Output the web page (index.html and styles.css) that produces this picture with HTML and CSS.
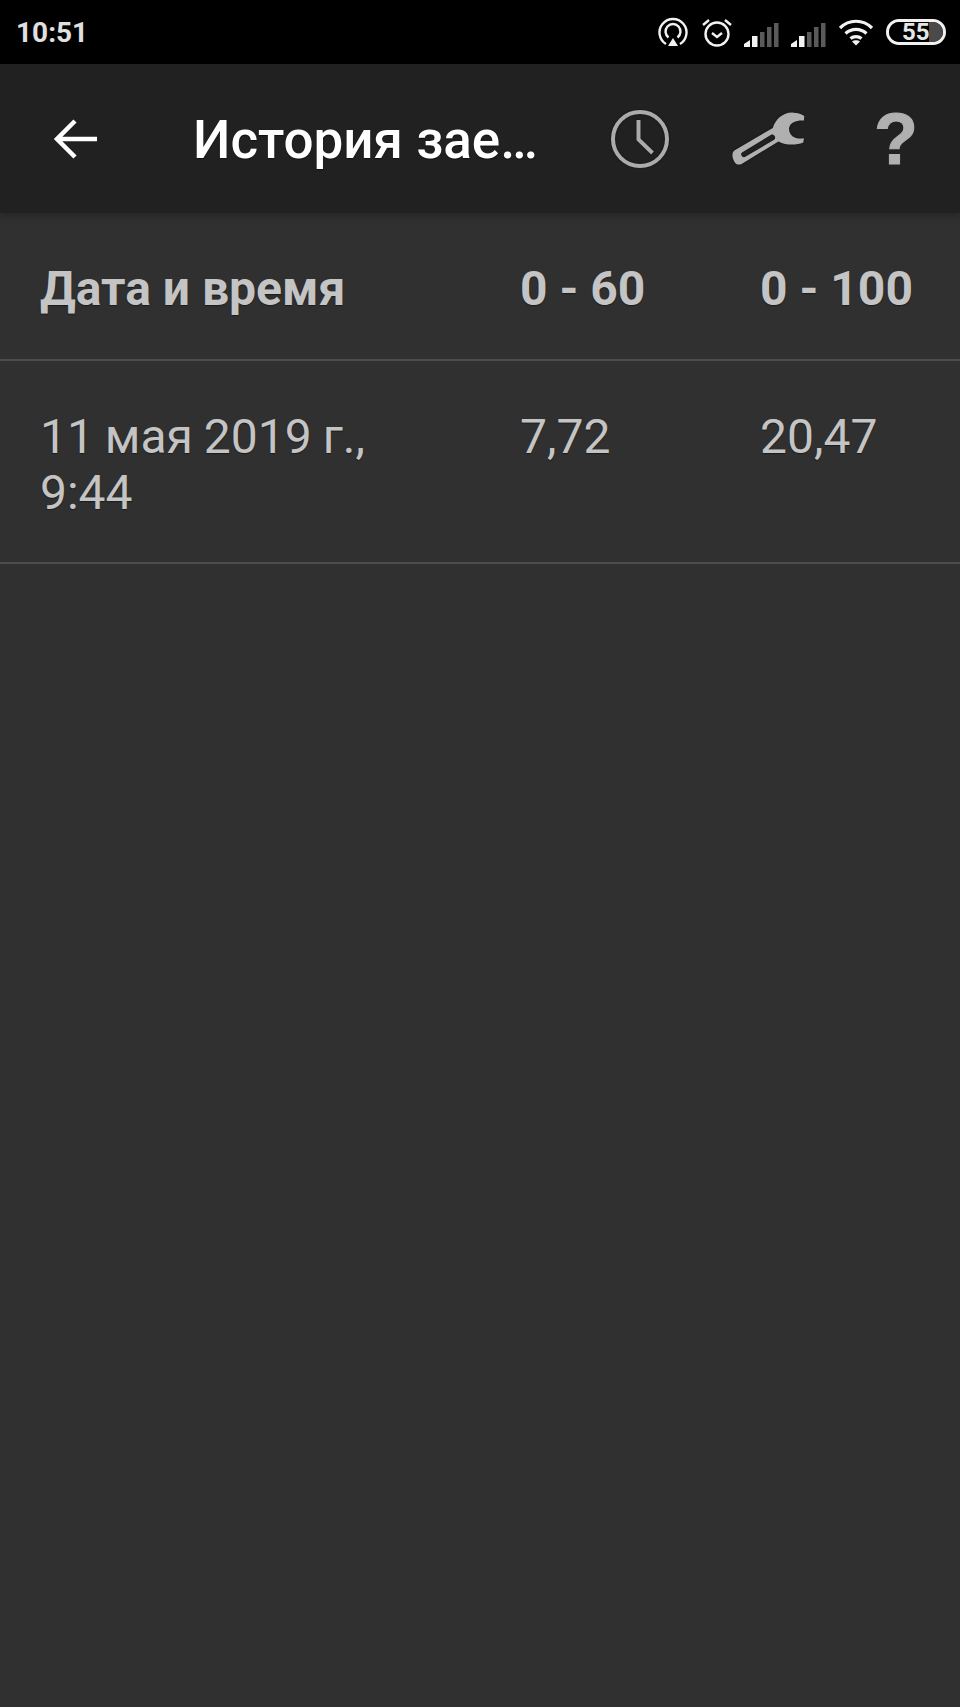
FILE: index.html
```html
<!DOCTYPE html>
<html lang="ru">

<head>
    <meta charset="UTF-8">
    <meta name="viewport" content="width=device-width, initial-scale=1.0">
    <title>История заездов</title>
    <link rel="stylesheet" href="styles.css">
</head>

<body>
    <!-- status bar -->
    <div class="status">
        <span class="time">10:51</span>
        <div class="status-icons">
            <svg class="ic-cast" viewBox="0 0 32 32" width="32" height="32">
                <path d="M9 28A13.5 13.5 0 1 1 23 28M11.5 21.5A7.5 7.5 0 1 1 20.5 21.5" fill="none" stroke="#f2f2f2" stroke-width="2.400" />
                <path d="M16 22L21 30H11Z" fill="#f2f2f2" />
            </svg>
            <svg class="ic-alarm" viewBox="0 0 32 32" width="32" height="32">
                <circle cx="16" cy="18" r="11.5" fill="none" stroke="#f2f2f2" stroke-width="2.400" />
                <path d="M11 17L16 21L21 17" fill="none" stroke="#f2f2f2" stroke-width="2.400" />
                <path d="M2 9L8 4M30 9L24 4" fill="none" stroke="#f2f2f2" stroke-width="2.400" />
            </svg>
            <svg class="ic-signal" viewBox="0 0 35 26" width="35" height="26">
                <path d="M0 25V22L6 18V25Z" fill="#f2f2f2" />
                <rect x="8" y="14" width="5.500" height="11" fill="#f2f2f2" />
                <rect x="16" y="10" width="4.500" height="15" fill="#5a5a5a" />
                <rect x="23" y="5" width="4.500" height="20" fill="#5a5a5a" />
                <rect x="30" y="1" width="4.500" height="24" fill="#5a5a5a" />
            </svg>
            <svg class="ic-signal" viewBox="0 0 35 26" width="35" height="26">
                <path d="M0 25V22L6 18V25Z" fill="#f2f2f2" />
                <rect x="8" y="14" width="5.500" height="11" fill="#f2f2f2" />
                <rect x="16" y="10" width="4.500" height="15" fill="#5a5a5a" />
                <rect x="23" y="5" width="4.500" height="20" fill="#5a5a5a" />
                <rect x="30" y="1" width="4.500" height="24" fill="#5a5a5a" />
            </svg>
            <svg class="ic-wifi" viewBox="0 0 36 28" width="36" height="28">
                <path d="M2 10C11 1 25 1 34 10M7.500 15.500C13.500 10 22.500 10 28.500 15.500M12.500 20.500C15.500 18 20.500 18 23.500 20.500" fill="none" stroke="#f2f2f2" stroke-width="3.200" />
                <path d="M18 27.500L14 23.500C16 21.800 20 21.800 22 23.500Z" fill="#f2f2f2" />
            </svg>
            <div class="battery">
                <div class="battery-level"></div>
                <span class="battery-num">55</span>
            </div>
        </div>
    </div>

    <!-- toolbar -->
    <div class="toolbar">
        <svg class="back" viewBox="0 0 44 44" width="44" height="44">
            <path d="M44 22H4M22 4L4 22L22 40" fill="none" stroke="#fff" stroke-width="4.500" />
        </svg>
        <div class="title">История зае…</div>
        <svg class="tool tool-clock" viewBox="0 0 60 60" width="60" height="60">
            <circle cx="30" cy="30" r="27" fill="none" stroke="#ababab" stroke-width="4" />
            <path d="M28.500 11V30.500L42.500 44" fill="none" stroke="#ababab" stroke-width="4" />
        </svg>
        <svg class="tool tool-wrench" viewBox="420 60 230 175" width="77" height="58">
            <path fill="#b0b0b0" fill-rule="evenodd" d="M432 182L548 114C556 88 580 66 610 68C625 68 635 72 643 78L642 92C625 90 600 95 597 115C596 140 620 150 642 145L640 158C620 166 590 168 565 155L455 222C445 228 435 224 430 212C424 200 425 188 432 182ZM455 188C451 191 452 198 456 200C458 203 462 203 465 201L552 150C556 147 556 142 553 138C550 134 546 133 543 135Z" />
        </svg>
        <span class="tool-help">?</span>
    </div>

    <!-- table -->
    <div class="table">
        <div class="row row-head">
            <div>Дата и время</div>
            <div>0 - 60</div>
            <div>0 - 100</div>
        </div>
        <div class="row row-item">
            <div>11 мая 2019 г., <br>9:44</div>
            <div>7,72</div>
            <div>20,47</div>
        </div>
    </div>
</body>

</html>
```

FILE: styles.css
```css
html,
body {
    margin: 0;
    height: 100%;
}

body {
    display: flex;
    flex-direction: column;
    overflow: hidden;
    background: #303030;
    font-family: Roboto, "Liberation Sans", sans-serif;
}

.status {
    height: 64px;
    flex: none;
    display: flex;
    align-items: center;
    justify-content: space-between;
    padding: 0 14px 0 16px;
    background: #000;
}

.time {
    font-size: 28px;
    font-weight: 700;
    color: #e0e0e0;
}

.status-icons {
    display: flex;
    align-items: center;
    gap: 12px;
}

.ic-signal {
    margin-top: 6px;
}

.ic-alarm {
    margin-right: -1px;
}

.battery {
    position: relative;
    width: 54px;
    height: 20px;
    border: 3px solid #f2f2f2;
    border-radius: 13px;
    overflow: hidden;
}

.battery-level {
    width: 40px;
    height: 100%;
    background: #000;
    box-shadow: 20px 0 0 #4a4a4a;
}

.battery-num {
    position: absolute;
    left: 13px;
    top: -4px;
    font-size: 24px;
    line-height: 28px;
    font-weight: 700;
    color: #e6e6e6;
}

.toolbar {
    position: relative;
    height: 149px;
    flex: none;
    display: flex;
    align-items: center;
    padding: 0 42px 0 53px;
    background: #212121;
    box-shadow: 0 2px 8px rgba(0, 0, 0, .25);
}

.title {
    margin-left: 96px;
    padding-top: 2px;
    width: 423px;
    font-size: 53px;
    font-weight: 500;
    color: #fff;
    white-space: nowrap;
    text-shadow: 0 1px 1px #111;
}

.back {
    flex: none;
}

.tool {
    flex: none;
    filter: drop-shadow(0 0 1px #111);
}

.tool-wrench {
    margin-left: 60px;
}

.tool-help {
    margin-left: 67px;
    font-family: "Liberation Sans", sans-serif;
    font-size: 72px;
    font-weight: 700;
    line-height: 72px;
    color: #b0b0b0;
    -webkit-text-stroke: 1px #b0b0b0;
}

.row {
    box-sizing: border-box;
    display: grid;
    grid-template-columns: 480px 240px 1fr;
    padding-left: 40px;
    border-bottom: 2px solid #4c4c4c;
    font-size: 48px;
    line-height: 56px;
    color: #c4c4c4;
    text-shadow: 0 1px 1px #1c1c1c;
}

.row-head {
    height: 148px;
    padding-top: 6px;
    align-items: center;
    font-weight: 700;
}

.row-item {
    height: 203px;
    padding-top: 48px;
    word-spacing: -1px;
}
```
